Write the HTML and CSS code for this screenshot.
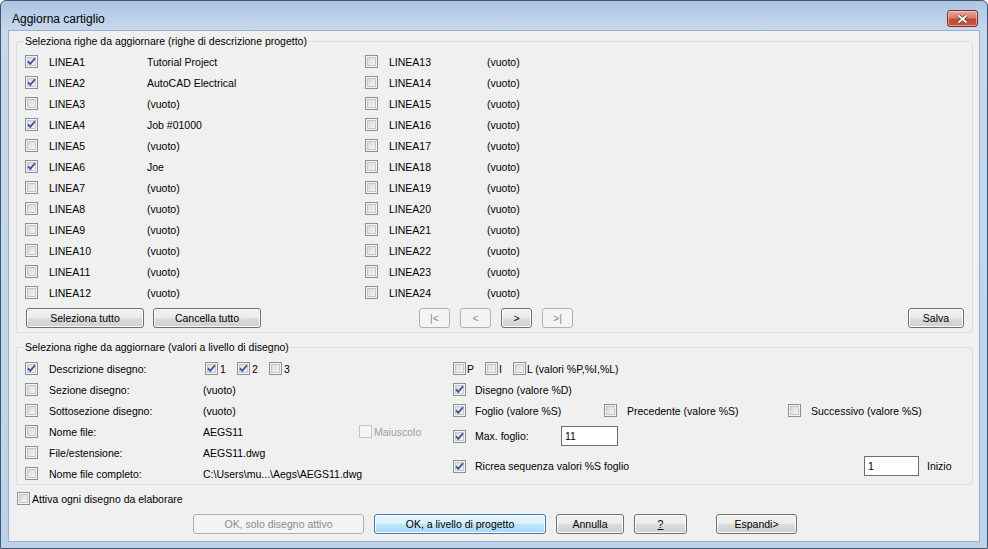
FILE: index.html
```html
<!DOCTYPE html>
<html>
<head>
<meta charset="utf-8">
<title>Aggiorna cartiglio</title>
<link rel="stylesheet" href="styles.css">
</head>
<body>
<div class="window">
  <div class="titlebar">
    <span class="title">Aggiorna cartiglio</span>
    <span class="close"><svg width="13" height="10" viewBox="0 0 13 10"><path class="xo" d="M2.5 1.5 L10.5 8.5 M10.5 1.5 L2.5 8.5"/><path class="xi" d="M2.5 1.5 L10.5 8.5 M10.5 1.5 L2.5 8.5"/></svg></span>
  </div>
  <div class="client">
    <fieldset class="group g1">
      <legend>Seleziona righe da aggiornare (righe di descrizione progetto)</legend>
      <div class="lines">
        <div class="row"><span class="cb"><svg class="tick" viewBox="0 0 11 11"><path d="M2 5.3 L4.3 7.9 L9 2.2"/></svg></span><span class="lbl">LINEA1</span><span>Tutorial Project</span></div>
        <div class="row"><span class="cb"><svg class="tick" viewBox="0 0 11 11"><path d="M2 5.3 L4.3 7.9 L9 2.2"/></svg></span><span class="lbl">LINEA2</span><span>AutoCAD Electrical</span></div>
        <div class="row"><span class="cb"></span><span class="lbl">LINEA3</span><span>(vuoto)</span></div>
        <div class="row"><span class="cb"><svg class="tick" viewBox="0 0 11 11"><path d="M2 5.3 L4.3 7.9 L9 2.2"/></svg></span><span class="lbl">LINEA4</span><span>Job #01000</span></div>
        <div class="row"><span class="cb"></span><span class="lbl">LINEA5</span><span>(vuoto)</span></div>
        <div class="row"><span class="cb"><svg class="tick" viewBox="0 0 11 11"><path d="M2 5.3 L4.3 7.9 L9 2.2"/></svg></span><span class="lbl">LINEA6</span><span>Joe</span></div>
        <div class="row"><span class="cb"></span><span class="lbl">LINEA7</span><span>(vuoto)</span></div>
        <div class="row"><span class="cb"></span><span class="lbl">LINEA8</span><span>(vuoto)</span></div>
        <div class="row"><span class="cb"></span><span class="lbl">LINEA9</span><span>(vuoto)</span></div>
        <div class="row"><span class="cb"></span><span class="lbl">LINEA10</span><span>(vuoto)</span></div>
        <div class="row"><span class="cb"></span><span class="lbl">LINEA11</span><span>(vuoto)</span></div>
        <div class="row"><span class="cb"></span><span class="lbl">LINEA12</span><span>(vuoto)</span></div>
        <div class="row"><span class="cb"></span><span class="lbl">LINEA13</span><span>(vuoto)</span></div>
        <div class="row"><span class="cb"></span><span class="lbl">LINEA14</span><span>(vuoto)</span></div>
        <div class="row"><span class="cb"></span><span class="lbl">LINEA15</span><span>(vuoto)</span></div>
        <div class="row"><span class="cb"></span><span class="lbl">LINEA16</span><span>(vuoto)</span></div>
        <div class="row"><span class="cb"></span><span class="lbl">LINEA17</span><span>(vuoto)</span></div>
        <div class="row"><span class="cb"></span><span class="lbl">LINEA18</span><span>(vuoto)</span></div>
        <div class="row"><span class="cb"></span><span class="lbl">LINEA19</span><span>(vuoto)</span></div>
        <div class="row"><span class="cb"></span><span class="lbl">LINEA20</span><span>(vuoto)</span></div>
        <div class="row"><span class="cb"></span><span class="lbl">LINEA21</span><span>(vuoto)</span></div>
        <div class="row"><span class="cb"></span><span class="lbl">LINEA22</span><span>(vuoto)</span></div>
        <div class="row"><span class="cb"></span><span class="lbl">LINEA23</span><span>(vuoto)</span></div>
        <div class="row"><span class="cb"></span><span class="lbl">LINEA24</span><span>(vuoto)</span></div>
      </div>
      <div class="btnrow">
        <button class="btn b-sel">Seleziona tutto</button>
        <button class="btn b-canc">Cancella tutto</button>
        <div class="nav">
          <button class="btn nb dis">|&lt;</button>
          <button class="btn nb dis">&lt;</button>
          <button class="btn nb">&gt;</button>
          <button class="btn nb dis">&gt;|</button>
        </div>
        <button class="btn b-salva">Salva</button>
      </div>
    </fieldset>

    <fieldset class="group g2">
      <legend>Seleziona righe da aggiornare (valori a livello di disegno)</legend>
      <div class="g2body">
        <div class="lcol">
          <div class="row"><span class="cb"><svg class="tick" viewBox="0 0 11 11"><path d="M2 5.3 L4.3 7.9 L9 2.2"/></svg></span><span class="lbl2">Descrizione disegno:</span>
            <span class="subs">
              <span class="sub"><span class="cb"><svg class="tick" viewBox="0 0 11 11"><path d="M2 5.3 L4.3 7.9 L9 2.2"/></svg></span>1</span>
              <span class="sub"><span class="cb"><svg class="tick" viewBox="0 0 11 11"><path d="M2 5.3 L4.3 7.9 L9 2.2"/></svg></span>2</span>
              <span class="sub"><span class="cb"></span>3</span>
            </span>
          </div>
          <div class="row"><span class="cb"></span><span class="lbl2">Sezione disegno:</span><span>(vuoto)</span></div>
          <div class="row"><span class="cb"></span><span class="lbl2">Sottosezione disegno:</span><span>(vuoto)</span></div>
          <div class="row"><span class="cb"></span><span class="lbl2">Nome file:</span><span class="val2">AEGS11</span><span class="cb dis"></span><span class="distext">Maiuscolo</span></div>
          <div class="row"><span class="cb"></span><span class="lbl2">File/estensione:</span><span>AEGS11.dwg</span></div>
          <div class="row"><span class="cb"></span><span class="lbl2">Nome file completo:</span><span>C:\Users\mu...\Aegs\AEGS11.dwg</span></div>
        </div>
        <div class="rcol">
          <div class="row">
            <span class="mini"><span class="cb"></span>P</span>
            <span class="mini"><span class="cb"></span>I</span>
            <span class="mini"><span class="cb"></span>L (valori %P,%I,%L)</span>
          </div>
          <div class="row"><span class="cb r"><svg class="tick" viewBox="0 0 11 11"><path d="M2 5.3 L4.3 7.9 L9 2.2"/></svg></span><span>Disegno (valore %D)</span></div>
          <div class="row">
            <span class="opt o-fog"><span class="cb r"><svg class="tick" viewBox="0 0 11 11"><path d="M2 5.3 L4.3 7.9 L9 2.2"/></svg></span>Foglio (valore %S)</span>
            <span class="opt o-prec"><span class="cb r2"></span>Precedente (valore %S)</span>
            <span class="opt"><span class="cb r2"></span>Successivo (valore %S)</span>
          </div>
          <div class="row tall"><span class="cb r"><svg class="tick" viewBox="0 0 11 11"><path d="M2 5.3 L4.3 7.9 L9 2.2"/></svg></span><span class="lbl-max">Max. foglio:</span><span class="input i-max">11</span></div>
          <div class="row tall"><span class="cb r"><svg class="tick" viewBox="0 0 11 11"><path d="M2 5.3 L4.3 7.9 L9 2.2"/></svg></span><span class="lbl-ric">Ricrea sequenza valori %S foglio</span><span class="input i-ini">1</span><span>Inizio</span></div>
        </div>
      </div>
    </fieldset>

    <div class="attiva"><span class="cb"></span>Attiva ogni disegno da elaborare</div>

    <div class="footer">
      <button class="btn dis f-solo">OK, solo disegno attivo</button>
      <button class="btn def f-prog">OK, a livello di progetto</button>
      <button class="btn f-ann">Annulla</button>
      <button class="btn f-help"><u>?</u></button>
      <button class="btn f-esp">Espandi&gt;</button>
    </div>
  </div>
</div>
</body>
</html>
```

FILE: styles.css
```css
html, body {
  margin: 0;
  padding: 0;
  background: #ffffff;
}

.window {
  width: 988px;
  height: 549px;
  box-sizing: border-box;
  border: 1px solid #45566b;
  border-radius: 6px 6px 0 0;
  background: linear-gradient(to bottom, #adc5e3 0px, #c6d8ee 29px, #bcd3ed 100%);
  padding: 0 7px 6px 7px;
  display: flex;
  flex-direction: column;
  font-family: "Liberation Sans", Arial, sans-serif;
  font-size: 10.5px;
  color: #000;
}

.titlebar {
  height: 29px;
  box-sizing: border-box;
  padding: 6px 2px 0 4px;
  display: flex;
  align-items: center;
  justify-content: space-between;
  flex: none;
}

.title {
  font-family: "Liberation Sans", Arial, sans-serif;
  font-size: 12px;
  line-height: 16px;
  color: #000;
}

.close {
  width: 31px;
  height: 17px;
  box-sizing: border-box;
  border: 1px solid #7d2e26;
  border-radius: 3px;
  background: linear-gradient(to bottom, #e6a99a 0%, #d7806c 45%, #c24a33 55%, #c8553b 100%);
  box-shadow: inset 0 0 0 1px rgba(255, 220, 210, 0.55);
  display: flex;
  align-items: center;
  justify-content: center;
}

.close svg { display: block; }
.close .xo { stroke: #5b3a35; stroke-width: 3.6; fill: none; }
.close .xi { stroke: #ffffff; stroke-width: 2; fill: none; }

.client {
  flex: 1;
  background: #f0f0f0;
  border: 1px solid #9cb0c8;
  display: flex;
  flex-direction: column;
}

.group {
  margin: 4px 6px 0 7px;
  padding: 3px 8px 4px 8px;
  border: 1px solid #d5dfe5;
  border-radius: 3px;
  min-width: 0;
}

.group legend {
  padding: 0 1px;
  margin-left: -1px;
  line-height: 13px;
  font-size: 10.5px;
}

.g2 {
  margin-top: 8px;
  padding: 4px 8px 0 8px;
}

.lines {
  display: grid;
  grid-template-columns: 340px 340px;
  grid-template-rows: repeat(12, 21px);
  grid-auto-flow: column;
}

.row {
  display: flex;
  align-items: center;
  height: 21px;
  white-space: nowrap;
}

.cb {
  width: 13px;
  height: 13px;
  box-sizing: border-box;
  border: 1px solid #8e8f8f;
  background: linear-gradient(135deg, #cfd2d6 0%, #f6f6f6 85%);
  box-shadow: inset 0 0 0 1px #f4f4f4, inset 0 0 0 2px #c4c7cb;
  flex: none;
  margin-right: 11px;
  display: inline-block;
}

.cb.dis {
  border-color: #c4c4c4;
  background: #f4f4f4;
  box-shadow: none;
  margin-right: 2px;
}

.tick {
  display: block;
  width: 11px;
  height: 11px;
}

.tick path {
  fill: none;
  stroke: #3b539c;
  stroke-width: 1.8;
}

.lbl { width: 98px; }
.lbl2 { width: 154px; }
.val2 { width: 156px; }
.distext { color: #a0a0a0; }

.subs {
  display: flex;
  margin-left: 2px;
}

.sub {
  width: 32px;
  display: flex;
  align-items: center;
}

.sub .cb { margin-right: 2px; }

.btnrow {
  display: flex;
  margin-top: 5px;
  height: 20px;
}

.btn {
  height: 20px;
  box-sizing: border-box;
  border: 1px solid #707070;
  border-radius: 3px;
  background: linear-gradient(to bottom, #f2f2f2 0%, #ebebeb 50%, #dddddd 50%, #cfcfcf 100%);
  box-shadow: inset 0 0 0 1px #fbfbfb;
  font-family: "Liberation Sans", Arial, sans-serif;
  font-size: 10.5px;
  color: #000;
  padding: 0;
  margin: 0;
  text-align: center;
  line-height: 18px;
}

.btn.dis {
  border-color: #adb2b5;
  background: #f4f4f4;
  box-shadow: none;
  color: #8a8a8a;
}

.btn.def {
  border-color: #3c7fb1;
  background: linear-gradient(to bottom, #eaf6fd 0%, #d9f0fc 50%, #bee6fd 50%, #a7d9f5 100%);
  box-shadow: inset 0 0 0 1px #f2fbff;
}

.b-sel { width: 118px; margin-left: 1px; }
.b-canc { width: 108px; margin-left: 9px; }

.nav {
  display: flex;
  gap: 10px;
  margin-left: 158px;
}

.nb { width: 31px; }

.b-salva { width: 56px; margin-left: auto; }

.g2body {
  display: flex;
}

.lcol { width: 428px; }
.rcol { flex: 1; }

.rcol .cb.r { margin-right: 9px; }
.rcol .cb.r2 { margin-right: 10px; }

.mini {
  display: flex;
  align-items: center;
  margin-right: 11px;
}

.mini .cb { margin-right: 1px; }

.opt {
  display: flex;
  align-items: center;
}

.o-fog { width: 151px; }
.o-prec { width: 184px; }

.row.tall { height: 30px; }

.lbl-max { width: 86px; }
.lbl-ric { width: 389px; }

.input {
  box-sizing: border-box;
  height: 20px;
  border: 1px solid #6f6f6f;
  background: #ffffff;
  padding: 0 3px;
  line-height: 18px;
}

.i-max { width: 57px; }
.i-ini { width: 55px; margin-right: 8px; }

.attiva {
  display: flex;
  align-items: center;
  height: 21px;
  margin: 3px 0 0 8px;
}

.attiva .cb { margin-right: 2px; }

.footer {
  display: flex;
  margin-top: 5px;
  padding-left: 184px;
}

.f-solo { width: 171px; }
.f-prog { width: 172px; margin-left: 10px; }
.f-ann { width: 68px; margin-left: 10px; }
.f-help { width: 53px; margin-left: 10px; }
.f-esp { width: 81px; margin-left: 29px; }
```
